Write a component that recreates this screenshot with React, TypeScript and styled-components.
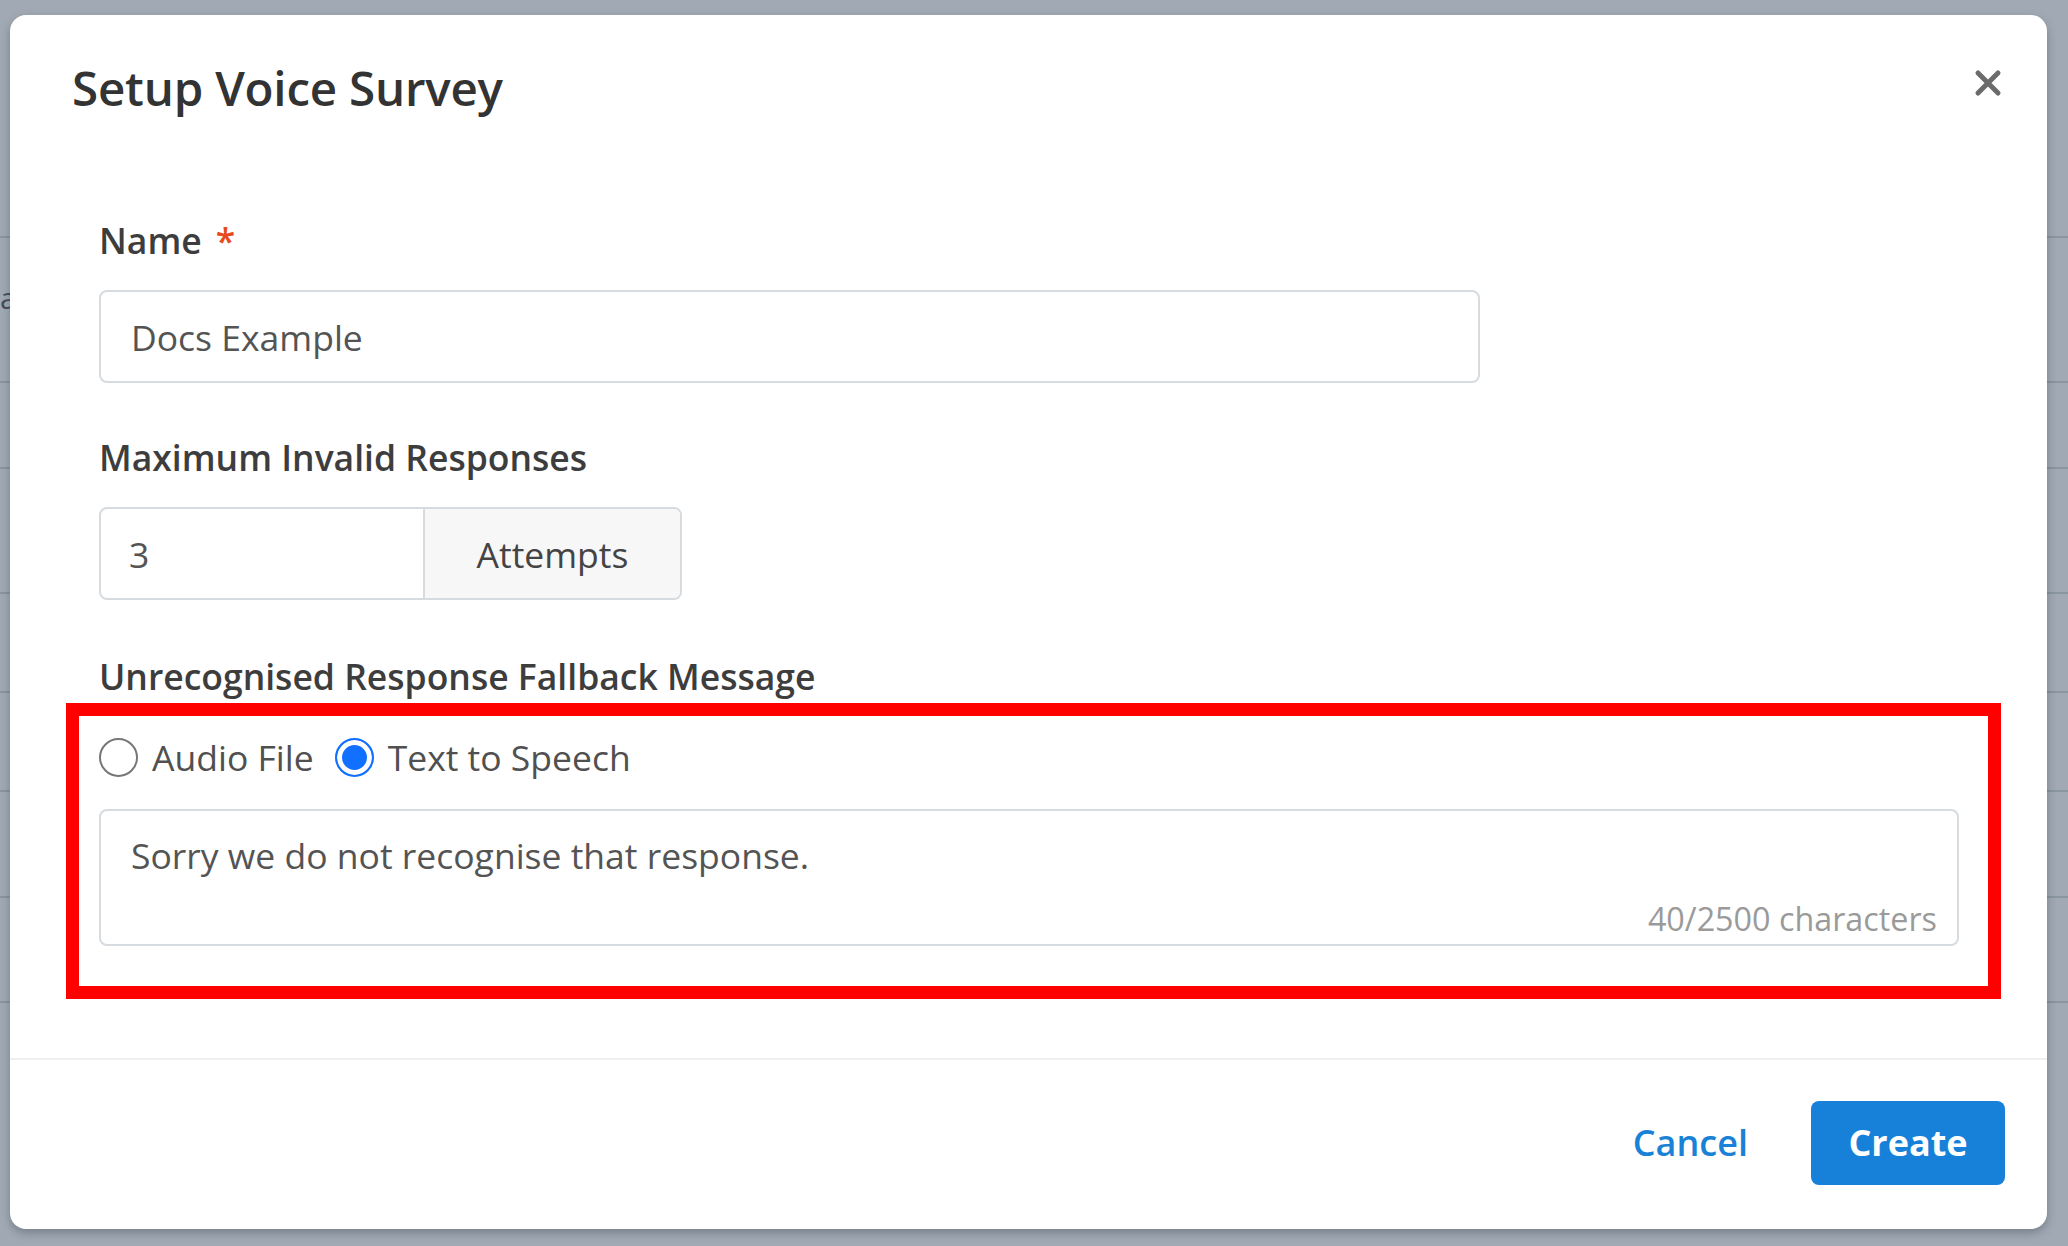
import React from "react";
import styled, { createGlobalStyle } from "styled-components";

const GlobalStyle = createGlobalStyle`
  html, body {
    margin: 0;
    padding: 0;
    width: 2068px;
    height: 1246px;
    overflow: hidden;
    font-family: "Open Sans", "Noto Sans", sans-serif;
  }
  * { box-sizing: border-box; }
`;

const Page = styled.div`
  position: relative;
  width: 2068px;
  height: 1246px;
  background: #ffffff;
  overflow: hidden;
`;

const BehindTable = styled.div`
  display: flex;
  flex-direction: column;
  padding-top: 236px;
`;

const BehindRow = styled.div<{ $h: number }>`
  height: ${(p) => p.$h}px;
  border-top: 2px solid #c9d0d6;
  font-family: "Open Sans", sans-serif;
  font-size: 30px;
  line-height: 40px;
  color: #333;
  padding-top: 40px;
`;

const Backdrop = styled.div`
  position: absolute;
  inset: 0;
  background: rgba(84, 101, 118, 0.55);
  display: flex;
  justify-content: flex-start;
  align-items: flex-start;
  padding: 15px 21px 17px 10px;
`;

const Modal = styled.div`
  width: 2037px;
  height: 1214px;
  background: #ffffff;
  border-radius: 16px;
  box-shadow: 0 4px 10px rgba(40, 50, 60, 0.35);
  display: flex;
  flex-direction: column;
`;

const Header = styled.div`
  display: flex;
  justify-content: space-between;
  align-items: flex-start;
  padding: 43px 45px 0 62px;
  height: 105px;
`;

const Title = styled.h2`
  margin: 0;
  font-size: 47.5px;
  line-height: 60px;
  font-weight: 600;
  color: #333333;
  letter-spacing: -0.2px;
`;

const CloseButton = styled.button`
  border: 0;
  background: transparent;
  padding: 0;
  margin-top: 10px;
  width: 28px;
  height: 30px;
  display: flex;
  align-items: center;
  justify-content: center;
  cursor: pointer;
`;

const Body = styled.div`
  flex: 1;
  padding: 96px 88px 0 89px;
  display: flex;
  flex-direction: column;
`;

const Field = styled.div<{ $mt?: number }>`
  display: flex;
  flex-direction: column;
  margin-top: ${(p) => p.$mt ?? 0}px;
`;

const Label = styled.label<{ $mb?: number }>`
  font-size: 35.5px;
  line-height: 48px;
  font-weight: 600;
  color: #3d3d3d;
  margin-bottom: ${(p) => p.$mb ?? 26}px;
  display: flex;
  align-items: center;
`;

const Required = styled.span`
  color: #e8491d;
  margin-left: 14px;
  font-weight: 600;
`;

const TextInput = styled.div`
  width: 1381px;
  height: 93px;
  border: 2.5px solid #d6dbe0;
  border-radius: 8px;
  display: flex;
  align-items: center;
  padding-left: 30px;
  font-size: 35.5px;
  color: #545454;
`;

const InputGroup = styled.div`
  display: flex;
  width: 583px;
  height: 93px;
  border: 2.5px solid #d6dbe0;
  border-radius: 8px;
  overflow: hidden;
`;

const GroupValue = styled.div`
  width: 324px;
  display: flex;
  align-items: center;
  padding-left: 28px;
  font-size: 35.5px;
  color: #545454;
  border-right: 2.5px solid #d6dbe0;
`;

const Addon = styled.div`
  flex: 1;
  background: #f7f7f8;
  display: flex;
  align-items: center;
  justify-content: center;
  font-size: 35.5px;
  color: #444444;
`;

const Highlighted = styled.div`
  position: relative;
  display: flex;
  flex-direction: column;
  margin-top: 32px;

  &::after {
    content: "";
    position: absolute;
    left: -33px;
    right: -42px;
    top: -29px;
    bottom: -53px;
    border: 13px solid #ff0000;
    pointer-events: none;
  }
`;

const RadioRow = styled.div`
  display: flex;
  align-items: center;
  height: 50px;
`;

const RadioOption = styled.label`
  display: flex;
  align-items: center;
  gap: 14px;
  margin-right: 21px;
  font-size: 35.5px;
  color: #505050;
  cursor: pointer;
`;

const RadioCircle = styled.span<{ $checked?: boolean }>`
  width: 39px;
  height: 39px;
  border-radius: 50%;
  flex: none;
  border: 2.5px solid ${(p) => (p.$checked ? "#1170ff" : "#777777")};
  background: ${(p) => (p.$checked ? "#1170ff" : "#ffffff")};
  box-shadow: ${(p) => (p.$checked ? "inset 0 0 0 5px #ffffff" : "none")};
`;

const TextArea = styled.div`
  margin-top: 27px;
  height: 137px;
  border: 2.5px solid #d6dbe0;
  border-radius: 8px;
  display: flex;
  flex-direction: column;
  justify-content: space-between;
  padding: 20px 20px 6px 30px;
`;

const AreaText = styled.div`
  font-size: 35.5px;
  color: #545454;
  line-height: 48px;
`;

const Counter = styled.div`
  align-self: flex-end;
  font-size: 32.3px;
  line-height: 40px;
  color: #9a9a9a;
`;

const Divider = styled.div`
  height: 2px;
  background: #eeeff1;
`;

const Footer = styled.div`
  height: 169px;
  display: flex;
  align-items: center;
  justify-content: flex-end;
  padding: 0 42px 4px 0;
  gap: 55px;
`;

const LinkButton = styled.button`
  border: 0;
  background: transparent;
  font-family: "Open Sans", sans-serif;
  font-size: 36px;
  font-weight: 600;
  color: #1a82d6;
  padding: 0 8px;
  cursor: pointer;
`;

const PrimaryButton = styled.button`
  border: 0;
  width: 194px;
  height: 84px;
  border-radius: 8px;
  background: #1780d9;
  color: #ffffff;
  font-family: "Open Sans", sans-serif;
  font-size: 36px;
  font-weight: 700;
  cursor: pointer;
`;

const rows = [145, 86, 125, 99, 99, 106, 105, 120];

export default function App() {
  return (
    <>
      <GlobalStyle />
      <Page>
        <BehindTable>
          {rows.map((h, i) => (
            <BehindRow key={i} $h={h}>
              {i === 0 ? "a" : ""}
            </BehindRow>
          ))}
        </BehindTable>
        <Backdrop>
          <Modal>
            <Header>
              <Title>Setup Voice Survey</Title>
              <CloseButton aria-label="Close">
                <svg width="28" height="28" viewBox="0 0 28 28">
                  <path
                    d="M4 4 L24 24 M24 4 L4 24"
                    stroke="#6b6b6b"
                    strokeWidth="5"
                    strokeLinecap="round"
                  />
                </svg>
              </CloseButton>
            </Header>
            <Body>
              <Field>
                <Label>
                  Name<Required>*</Required>
                </Label>
                <TextInput>Docs Example</TextInput>
              </Field>
              <Field $mt={50}>
                <Label>Maximum Invalid Responses</Label>
                <InputGroup>
                  <GroupValue>3</GroupValue>
                  <Addon>Attempts</Addon>
                </InputGroup>
              </Field>
              <Field $mt={52}>
                <Label $mb={0}>Unrecognised Response Fallback Message</Label>
                <Highlighted>
                  <RadioRow>
                    <RadioOption>
                      <RadioCircle />
                      Audio File
                    </RadioOption>
                    <RadioOption>
                      <RadioCircle $checked />
                      Text to Speech
                    </RadioOption>
                  </RadioRow>
                  <TextArea>
                    <AreaText>Sorry we do not recognise that response.</AreaText>
                    <Counter>40/2500 characters</Counter>
                  </TextArea>
                </Highlighted>
              </Field>
            </Body>
            <Divider />
            <Footer>
              <LinkButton>Cancel</LinkButton>
              <PrimaryButton>Create</PrimaryButton>
            </Footer>
          </Modal>
        </Backdrop>
      </Page>
    </>
  );
}
